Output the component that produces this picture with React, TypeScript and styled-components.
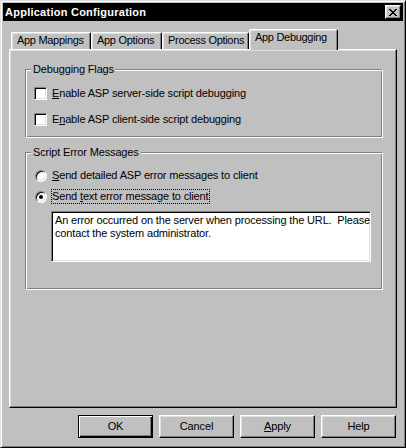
import React from "react";
import styled, { createGlobalStyle } from "styled-components";

const GlobalStyle = createGlobalStyle`
  html, body { margin: 0; padding: 0; background: #c0c0c0; }
  body {
    font-family: "Liberation Sans", Arial, sans-serif;
    font-size: 11px;
    letter-spacing: -0.15px;
    color: #000;
  }
  * { box-sizing: border-box; }
`;

const Window = styled.div`
  width: 406px;
  height: 448px;
  background: #c0c0c0;
  border: 1px solid;
  border-color: #dfdfdf #000 #000 #dfdfdf;
  box-shadow: inset 1px 1px #fff, inset -1px -1px #808080;
  padding: 2px;
  display: flex;
  flex-direction: column;
`;

const TitleBar = styled.div`
  height: 18px;
  background: #000;
  color: #fff;
  display: flex;
  align-items: center;
  justify-content: space-between;
  padding: 0 2px;
`;

const Title = styled.span`
  font-weight: bold;
  font-size: 11px;
  letter-spacing: 0.25px;
  line-height: 13px;
`;

const CloseButton = styled.div`
  width: 16px;
  height: 14px;
  background: #c0c0c0;
  border: 1px solid;
  border-color: #fff #000 #000 #fff;
  box-shadow: inset -1px -1px #808080, inset 1px 1px #dfdfdf;
  display: flex;
  align-items: center;
  justify-content: center;
`;

const Body = styled.div`
  flex: 1;
  padding: 8px 6px 0 6px;
  display: flex;
  flex-direction: column;
`;

const TabStrip = styled.div`
  height: 20px;
  display: flex;
  align-items: flex-end;
  padding-left: 2px;
`;

const Tab = styled.div<{ $active?: boolean; $w: number }>`
  width: ${(p) => p.$w}px;
  height: ${(p) => (p.$active ? 21 : 17)}px;
  margin-bottom: ${(p) => (p.$active ? -1 : 0)}px;
  position: relative;
  z-index: ${(p) => (p.$active ? 1 : 0)};
  background: #c0c0c0;
  border-left: 1px solid #fff;
  border-top: 1px solid #fff;
  border-right: 1px solid #000;
  border-radius: 2px 2px 0 0;
  box-shadow: inset -1px 0 #808080, inset 1px 1px #dfdfdf;
  padding: 1px 0 0 5px;
  line-height: 13px;
  letter-spacing: -0.3px;
  white-space: nowrap;
`;

const Panel = styled.div`
  height: 359px;
  border: 1px solid;
  border-color: #fff #000 #000 #fff;
  box-shadow: inset -1px -1px #808080, inset 1px 1px #dfdfdf;
  padding: 13px 13px 0 15px;
  display: flex;
  flex-direction: column;
`;

const Group = styled.fieldset<{ $mt?: number }>`
  margin: ${(p) => p.$mt ?? 0}px 0 0 0;
  padding: 0;
  min-width: 0;
  border: 1px solid;
  border-color: #808080 #fff #fff #808080;
  box-shadow: inset 1px 1px #fff, inset -1px -1px #808080;
`;

const Legend = styled.legend`
  padding: 0 2px;
  margin-left: 5px;
  line-height: 13px;
  height: 13px;
  background: #c0c0c0;
`;

const GroupBody = styled.div<{ $pt: number; $pb: number; $gap: number }>`
  padding: ${(p) => p.$pt}px 0 ${(p) => p.$pb}px 8px;
  display: flex;
  flex-direction: column;
  align-items: flex-start;
  gap: ${(p) => p.$gap}px;
`;

const OptionRow = styled.div<{ $h: number }>`
  height: ${(p) => p.$h}px;
  display: flex;
  align-items: center;
  gap: 5px;
  line-height: 13px;
  white-space: nowrap;
`;

const CheckBox = styled.span`
  width: 13px;
  height: 13px;
  background: #fff;
  border: 1px solid;
  border-color: #808080 #fff #fff #808080;
  box-shadow: inset 1px 1px #000, inset -1px -1px #dfdfdf;
  flex: none;
`;

const Radio = styled.span<{ $checked?: boolean }>`
  width: 12px;
  height: 12px;
  margin-left: 1px;
  border-radius: 50%;
  background: #fff;
  border: 1px solid;
  border-color: #808080 #fff #fff #808080;
  box-shadow: inset 1px 1px #000, inset -1px -1px #dfdfdf;
  flex: none;
  display: flex;
  align-items: center;
  justify-content: center;
  &::after {
    content: "";
    width: 4px;
    height: 4px;
    border-radius: 50%;
    background: ${(p) => (p.$checked ? "#000" : "transparent")};
  }
`;

const Label = styled.span<{ $focused?: boolean }>`
  border: 1px dotted ${(p) => (p.$focused ? "#000" : "transparent")};
  padding: 0 1px 0 0;
  margin-left: -1px;
  line-height: 13px;
`;

const TextBox = styled.div`
  width: 320px;
  height: 51px;
  margin: 1px 0 0 17px;
  background: #fff;
  border: 1px solid;
  border-color: #808080 #fff #fff #808080;
  box-shadow: inset 1px 1px #000, inset -1px -1px #dfdfdf;
  padding: 2px 3px;
  line-height: 13px;
  white-space: pre;
`;

const ButtonRow = styled.div`
  margin-top: 7px;
  display: flex;
  justify-content: flex-end;
  gap: 6px;
  padding-right: 1px;
`;

const Button = styled.div<{ $default?: boolean }>`
  width: 75px;
  height: 23px;
  background: #c0c0c0;
  border: 1px solid;
  border-color: ${(p) => (p.$default ? "#000" : "#fff #000 #000 #fff")};
  box-shadow: ${(p) =>
    p.$default
      ? "inset 1px 1px #fff, inset -1px -1px #000, inset -2px -2px #808080"
      : "inset -1px -1px #808080, inset 1px 1px #dfdfdf"};
  display: flex;
  align-items: center;
  justify-content: center;
  line-height: 13px;
`;

export default function App() {
  return (
    <>
      <GlobalStyle />
      <Window>
        <TitleBar>
          <Title>Application Configuration</Title>
          <CloseButton>
            <svg width="8" height="7" viewBox="0 0 8 7">
              <path
                d="M0 0h2v1h1v1h2V1h1V0h2v1H7v1H6v1H5v1h1v1h1v1h1v1H6V6H5V5H3v1H2v1H0V6h1V5h1V4h1V3H2V2H1V1H0z"
                fill="#000"
              />
            </svg>
          </CloseButton>
        </TitleBar>
        <Body>
          <TabStrip>
            <Tab $w={80}>App Mappings</Tab>
            <Tab $w={71}>App Options</Tab>
            <Tab $w={87}>Process Options</Tab>
            <Tab $w={89} $active>
              App Debugging
            </Tab>
          </TabStrip>
          <Panel>
            <Group>
              <Legend>Debugging Flags</Legend>
              <GroupBody $pt={11} $pb={11} $gap={13}>
                <OptionRow $h={13}>
                  <CheckBox />
                  <span>
                    <u>E</u>nable ASP server-side script debugging
                  </span>
                </OptionRow>
                <OptionRow $h={13}>
                  <CheckBox />
                  <span>
                    E<u>n</u>able ASP client-side script debugging
                  </span>
                </OptionRow>
              </GroupBody>
            </Group>
            <Group $mt={8}>
              <Legend>Script Error Messages</Legend>
              <GroupBody $pt={9} $pb={27} $gap={6}>
                <OptionRow $h={15}>
                  <Radio />
                  <Label>
                    <u>S</u>end detailed ASP error messages to client
                  </Label>
                </OptionRow>
                <OptionRow $h={15}>
                  <Radio $checked />
                  <Label $focused>
                    Send <u>t</u>ext error message to client
                  </Label>
                </OptionRow>
                <TextBox>
                  {"An error occurred on the server when processing the URL.  Please\ncontact the system administrator."}
                </TextBox>
              </GroupBody>
            </Group>
          </Panel>
          <ButtonRow>
            <Button $default>OK</Button>
            <Button>Cancel</Button>
            <Button>
              <span>
                <u>A</u>pply
              </span>
            </Button>
            <Button>Help</Button>
          </ButtonRow>
        </Body>
      </Window>
    </>
  );
}
